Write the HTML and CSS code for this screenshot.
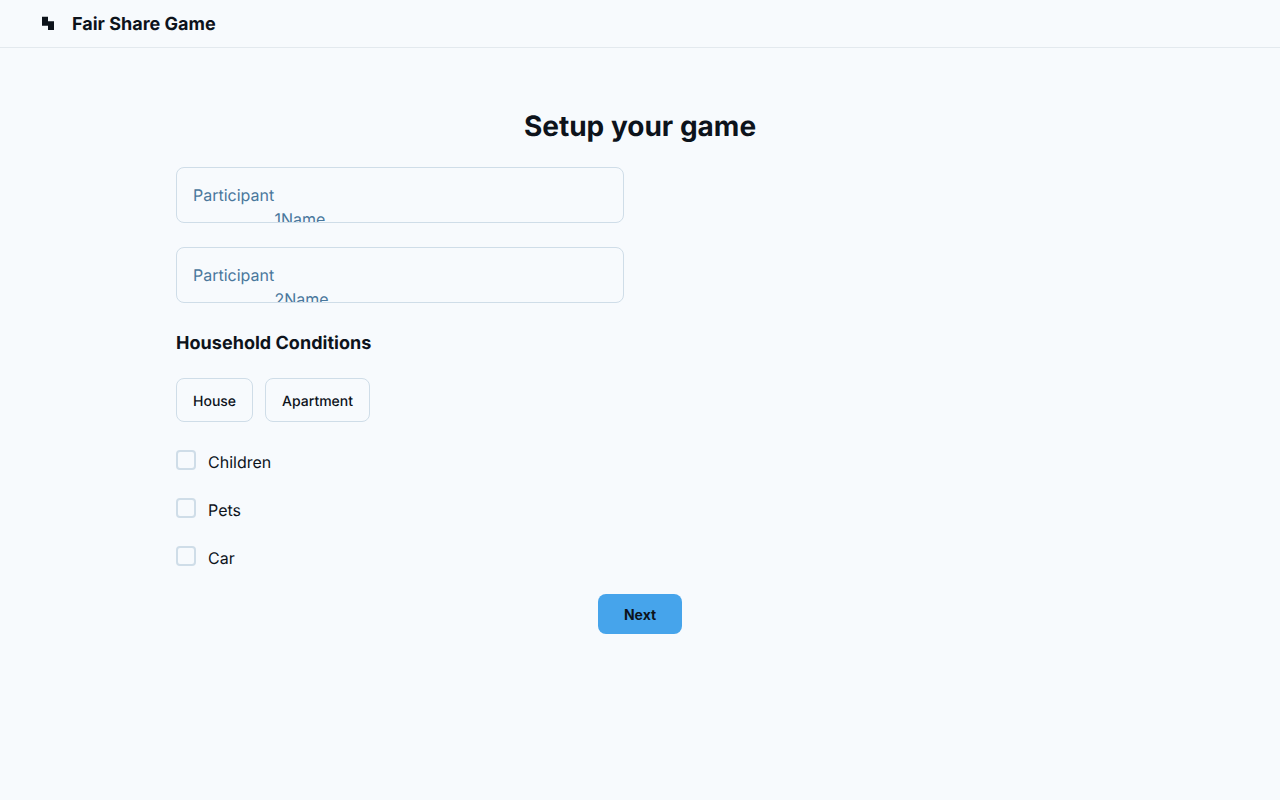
FILE: index.html
```html
<!DOCTYPE html>
<html lang="en">
<head>
<meta charset="utf-8">
<title>Fair Share Game</title>
<link rel="stylesheet" href="styles.css">
</head>
<body>
<header class="header">
  <svg class="logo" viewBox="0 0 16 16" aria-hidden="true"><path fill="currentColor" d="M2 .7H8V5.3H14V14H8V9.7H2Z"/></svg>
  <h2 class="brand">Fair Share Game</h2>
</header>
<main class="content">
  <h1 class="title">Setup your game</h1>
  <div class="field-row"><div class="field"><span>Participant</span><span class="field-rest">1Name</span></div></div>
  <div class="field-row"><div class="field"><span>Participant</span><span class="field-rest">2Name</span></div></div>
  <h3 class="section-title">Household Conditions</h3>
  <div class="choices">
    <label class="choice">House</label>
    <label class="choice">Apartment</label>
  </div>
  <div class="checks">
    <label class="check"><input class="box" type="checkbox"><span>Children</span></label>
    <label class="check"><input class="box" type="checkbox"><span>Pets</span></label>
    <label class="check"><input class="box" type="checkbox"><span>Car</span></label>
  </div>
  <div class="actions"><button class="next">Next</button></div>
</main>
</body>
</html>
```
FILE: styles.css
```css
* { box-sizing: border-box; margin: 0; }
body {
  min-height: 100vh;
  background: #f7fafd;
  color: #0d131b;
  font: 16px/24px Inter, "Noto Sans", sans-serif;
  text-rendering: geometricPrecision;
}
.header {
  display: flex;
  align-items: center;
  gap: 16px;
  height: 48px;
  padding: 1px 40px 0;
  border-bottom: 1px solid #e3e9ee;
}
.logo { width: 16px; height: 16px; }
.brand { padding-top: 2px; font-size: 18px; line-height: 24px; font-weight: 700; }
.content { width: 960px; margin: 0 auto; padding-top: 40px; }
.title { padding: 21px 16px 11px; font-size: 28px; line-height: 35px; font-weight: 700; text-align: center; }
.field-row { width: 480px; padding: 12px 16px; }
.field {
  height: 56px;
  overflow: hidden;
  padding: 15px 16px;
  border: 1px solid #cfdde8;
  border-radius: 8px;
  color: #49779c;
}
.field span { display: block; }
.field .field-rest { padding-left: 81.5px; }
.section-title { padding: 17px 16px 7px; font-size: 18px; line-height: 23px; letter-spacing: 0.03px; font-weight: 700; }
.choices { display: flex; gap: 12px; padding: 16px; }
.choice {
  height: 44px;
  padding: 1px 16px 0;
  border: 1px solid #cfdde8;
  border-radius: 8px;
  font-size: 14px;
  line-height: 43px;
  font-weight: 500;
}
.checks { padding: 0 16px; }
.check { display: flex; gap: 12px; padding: 12px 0; }
.box {
  appearance: none;
  width: 20px;
  height: 20px;
  border: 2px solid #cfdde8;
  border-radius: 4px;
}
.actions { display: flex; justify-content: center; padding: 12px 16px; }
.next {
  width: 84px;
  height: 40px;
  border: 0;
  border-radius: 8px;
  background: #46a4eb;
  color: #0d131b;
  font: 700 14px/21px Inter, sans-serif;
}
```
